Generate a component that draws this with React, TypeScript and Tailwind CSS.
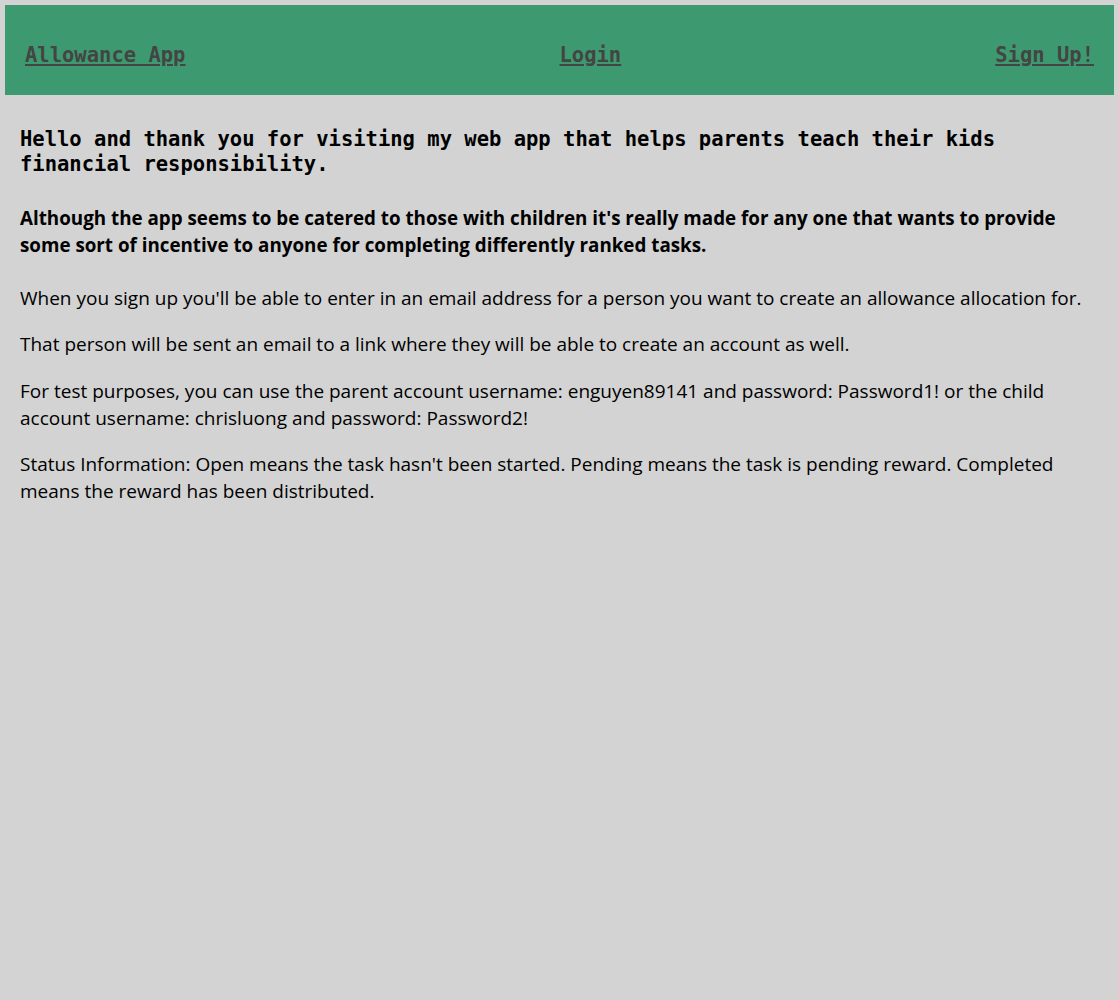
export default function App() {
  return (
    <div className="min-h-[1000px] bg-[#d3d3d3] p-[5px]">
      {/* nav */}
      <nav className="flex h-[90px] items-center justify-between bg-[#3d9970] px-5 pt-[10px] font-['DejaVu_Sans_Mono',monospace] text-[20.5px] font-bold text-[#444444]">
        <a href="#" className="underline underline-offset-2">Allowance App</a>
        <a href="#" className="underline underline-offset-2">Login</a>
        <a href="#" className="underline underline-offset-2">Sign Up!</a>
      </nav>

      <main className="px-[15px] pt-[32px] text-black">
        <h1 className="font-['DejaVu_Sans_Mono',monospace] text-[20.5px] font-bold leading-[25px]">
          Hello and thank you for visiting my web app that helps parents teach their kids financial responsibility.
        </h1>
        <div className="mt-[28px] font-['Open_Sans',sans-serif] text-[19px] leading-[27px]">
          <p className="text-[18.8px] font-bold">
            Although the app seems to be catered to those with children it's really made for any one that wants to provide some sort of incentive to anyone for completing differently ranked tasks.
          </p>
          <p className="mt-[26px]">
            When you sign up you'll be able to enter in an email address for a person you want to create an allowance allocation for.
          </p>
          <p className="mt-[19px]">That person will be sent an email to a link where they will be able to create an account as well.</p>
          <p className="mt-[20px]">
            For test purposes, you can use the parent account username: enguyen89141 and password: Password1! or the child account username: chrisluong and password: Password2!
          </p>
          <p className="mt-[19px]">
            Status Information: Open means the task hasn't been started. Pending means the task is pending reward. Completed means the reward has been distributed.
          </p>
        </div>
      </main>
    </div>
  );
}
